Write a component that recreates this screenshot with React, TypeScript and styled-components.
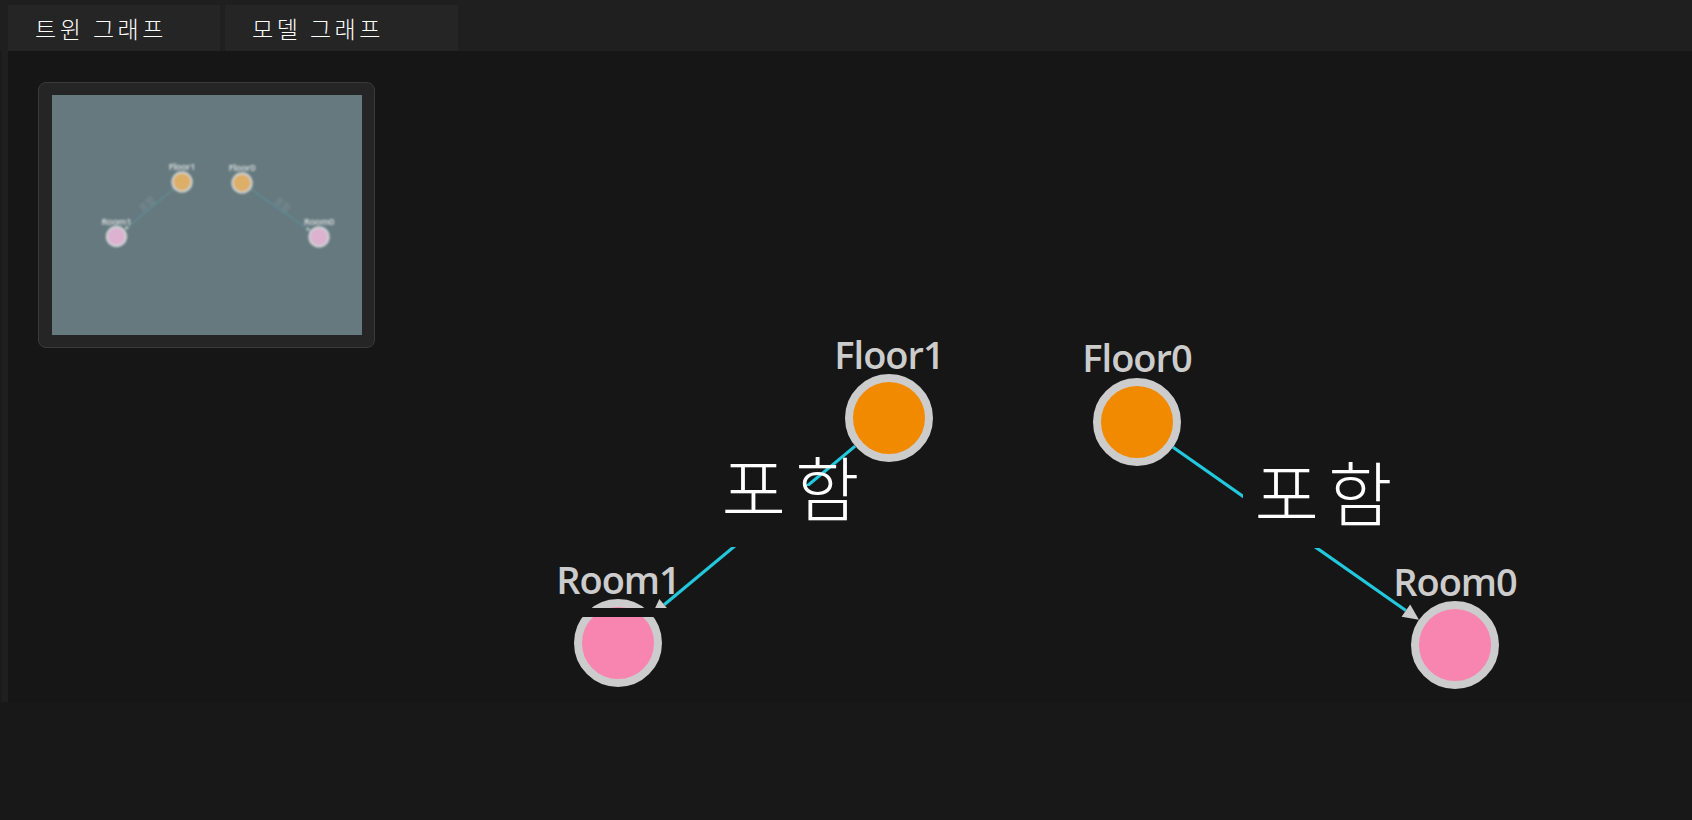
import React, {FC} from 'react';
import styled, {createGlobalStyle} from 'styled-components';

type GraphNode = {
  id: string;
  x: number;
  y: number;
  kind: 'floor' | 'room';
  labelY: number;
};

type GraphEdge = {
  from: string;
  to: string;
  label: string;
  labelX: number;
  labelY: number;
  bg: {x: number; y: number; w: number; h: number};
};

const nodes: GraphNode[] = [
  {id: 'Floor1', x: 889, y: 418, kind: 'floor', labelY: 369},
  {id: 'Floor0', x: 1137, y: 422, kind: 'floor', labelY: 372},
  {id: 'Room1', x: 618, y: 643, kind: 'room', labelY: 594},
  {id: 'Room0', x: 1455, y: 645, kind: 'room', labelY: 596},
];

const edges: GraphEdge[] = [
  {
    from: 'Floor1',
    to: 'Room1',
    label: '포함',
    labelX: 795,
    labelY: 516,
    bg: {x: 711, y: 486, w: 168, h: 61},
  },
  {
    from: 'Floor0',
    to: 'Room0',
    label: '포함',
    labelX: 1328,
    labelY: 521,
    bg: {x: 1243, y: 491, w: 168, h: 57},
  },
];

const NODE_R = 40;
const RING = 8;
const ARROW = 16;

const fill = {floor: '#f28a00', room: '#f785b0'};

function findNode(id: string) {
  return nodes.find((n) => n.id === id)!;
}

// geometry of one edge: from the source border to the arrow base
function edgeGeom(e: GraphEdge) {
  const a = findNode(e.from);
  const b = findNode(e.to);
  const dx = b.x - a.x;
  const dy = b.y - a.y;
  const len = Math.sqrt(dx * dx + dy * dy);
  const ux = dx / len;
  const uy = dy / len;
  const outer = NODE_R + RING / 2;
  const sx = a.x + ux * outer;
  const sy = a.y + uy * outer;
  const tx = b.x - ux * outer;
  const ty = b.y - uy * outer;
  const bx = tx - ux * ARROW;
  const by = ty - uy * ARROW;
  const px = -uy * 7.5;
  const py = ux * 7.5;
  const head = `${tx},${ty} ${bx + px},${by + py} ${bx - px},${by - py}`;
  const angle = (Math.atan2(dy, dx) * 180) / Math.PI;
  return {sx, sy, bx, by, head, angle, mx: (a.x + b.x) / 2, my: (a.y + b.y) / 2};
}

const GraphLayer: FC<{mini?: boolean}> = ({mini}) => (
  <g>
    {edges.map((e) => {
      const g = edgeGeom(e);
      return (
        <g key={e.from + e.to}>
          <EdgeLine x1={g.sx} y1={g.sy} x2={g.bx} y2={g.by} $mini={mini} />
          <ArrowHead points={g.head} $mini={mini} />
          {mini ? (
            <MiniEdgeText
              x={g.mx}
              y={g.my - 10}
              transform={`rotate(${g.angle > 90 ? g.angle - 180 : g.angle} ${g.mx} ${g.my - 10})`}>
              {e.label}
            </MiniEdgeText>
          ) : (
            <>
              <LabelBg x={e.bg.x} y={e.bg.y} width={e.bg.w} height={e.bg.h} />
              <EdgeText x={e.labelX} y={e.labelY}>
                {e.label}
              </EdgeText>
            </>
          )}
        </g>
      );
    })}
    {nodes.map((n) => (
      <g key={n.id}>
        <NodeCircle cx={n.x} cy={n.y} r={NODE_R} $kind={n.kind} $mini={mini} />
        <NodeLabel x={n.x} y={n.labelY} $mini={mini}>
          {n.id}
        </NodeLabel>
      </g>
    ))}
    {!mini && <LabelBg x={566} y={608} width={110} height={9} />}
  </g>
);

const App: FC = () => (
  <>
    <GlobalStyle />
    <Page>
      <TabBar>
        <Tab $active>트윈 그래프</Tab>
        <Tab>모델 그래프</Tab>
      </TabBar>
      <Workspace>
        <SideRail />
        <Canvas>
          <GraphSvg viewBox="8 51 1684 651" preserveAspectRatio="xMinYMin slice">
            <GraphLayer />
          </GraphSvg>
          <MiniMap>
            <MiniView viewBox="0 0 310 240">
              <defs>
                <filter id="mini-soft" x="-10%" y="-10%" width="120%" height="120%">
                  <feGaussianBlur stdDeviation="0.8" />
                </filter>
              </defs>
              <g filter="url(#mini-soft)">
                <g transform="translate(-85.1 -14.2) scale(0.242)">
                  <GraphLayer mini />
                </g>
              </g>
            </MiniView>
          </MiniMap>
        </Canvas>
      </Workspace>
    </Page>
  </>
);

const GlobalStyle = createGlobalStyle`
  html, body {
    margin: 0;
    padding: 0;
    background: #181818;
    font-family: "Noto Sans CJK KR", "Noto Sans", sans-serif;
  }
`;

const Page = styled.div`
  width: 100%;
  height: 100vh;
  display: flex;
  flex-direction: column;
  background: #181818;
`;

const TabBar = styled.div`
  display: flex;
  gap: 5px;
  height: 51px;
  box-sizing: border-box;
  padding: 5px 0 0 8px;
  background: #1f1f1f;
`;

const Tab = styled.div<{$active?: boolean}>`
  display: flex;
  align-items: center;
  box-sizing: border-box;
  padding: 0 0 0 27px;
  width: ${(p) => (p.$active ? '212px' : '233px')};
  background: #252525;
  color: #ffffff;
  font-family: "Noto Sans CJK KR", sans-serif;
  font-weight: 300;
  font-size: 23px;
  letter-spacing: 3.5px;
  white-space: nowrap;
`;

const Workspace = styled.div`
  display: flex;
  height: 651px;
`;

const SideRail = styled.div`
  width: 6px;
  border-left: 2px solid #1a1a1a;
  background: #1f1f1f;
`;

const Canvas = styled.div`
  position: relative;
  flex: 1;
  overflow: hidden;
  background: #161616;
`;

const GraphSvg = styled.svg`
  display: block;
  width: 100%;
  height: 100%;
`;

const MiniMap = styled.div`
  position: absolute;
  left: 30px;
  top: 31px;
  width: 337px;
  height: 266px;
  box-sizing: border-box;
  padding: 12px 12px 12px 13px;
  border: 1.5px solid #3a3a3a;
  border-radius: 8px;
  background: #252525;
`;

const MiniView = styled.svg`
  display: block;
  width: 310px;
  height: 240px;
  background: #66797f;
`;

const EdgeLine = styled.line<{$mini?: boolean}>`
  stroke: ${(p) => (p.$mini ? '#5aa6ad' : '#22c8dc')};
  stroke-width: 3.2;
`;

const ArrowHead = styled.polygon<{$mini?: boolean}>`
  fill: ${(p) => (p.$mini ? '#cfd6d6' : '#cccccc')};
`;

const LabelBg = styled.rect`
  fill: #161616;
`;

const EdgeText = styled.text`
  fill: #ffffff;
  font-family: "Noto Sans CJK KR", sans-serif;
  font-weight: 300;
  font-size: 70px;
  letter-spacing: 9px;
  text-anchor: middle;
`;

const MiniEdgeText = styled.text`
  fill: #7c9196;
  font-family: "Noto Sans CJK KR", sans-serif;
  font-size: 40px;
  text-anchor: middle;
`;

const NodeCircle = styled.circle<{$kind: 'floor' | 'room'; $mini?: boolean}>`
  fill: ${(p) =>
    p.$mini ? (p.$kind === 'floor' ? '#ddae68' : '#dcb2d0') : fill[p.$kind]};
  stroke: ${(p) => (p.$mini ? '#cfd6d6' : '#cccccc')};
  stroke-width: ${RING};
`;

const NodeLabel = styled.text<{$mini?: boolean}>`
  fill: ${(p) => (p.$mini ? '#dde3e3' : '#cccccc')};
  font-family: "Open Sans", "Noto Sans", sans-serif;
  font-weight: 600;
  font-size: 38px;
  letter-spacing: -1px;
  text-anchor: middle;
`;

export default App;
